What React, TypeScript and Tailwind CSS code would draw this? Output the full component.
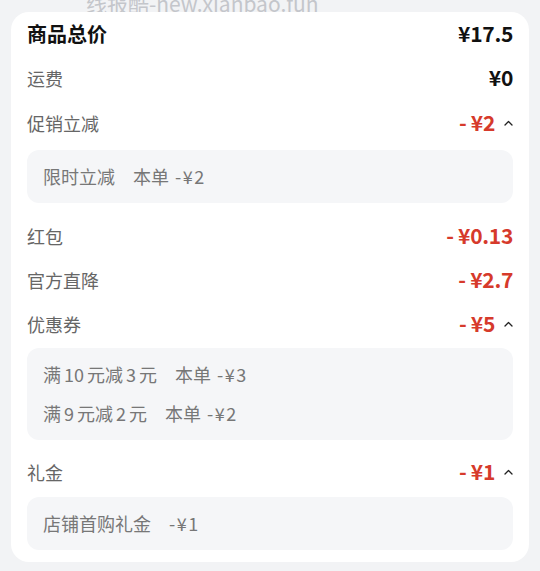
const font = { fontFamily: '"Noto Sans CJK SC", "Noto Sans", sans-serif' };

function Chevron() {
  return (
    <svg width="9" height="6" viewBox="0 0 9 6" className="ml-[9px]" fill="none">
      <path d="M1 5L4.5 1.5L8 5" stroke="#222" strokeWidth="1.3" strokeLinecap="round" strokeLinejoin="round" />
    </svg>
  );
}

function Row({ label, amount, red, toggle }: { label: string; amount: string; red?: boolean; toggle?: boolean }) {
  return (
    <div className="flex h-[44px] items-center justify-between">
      <span className="text-[18px] text-[#666]">{label}</span>
      <div className="flex items-center">
        <span className={`text-[21px] font-bold tracking-[-0.3px] ${red ? 'text-[#d63a2b]' : 'text-[#111]'}`}>{amount}</span>
        {toggle && <Chevron />}
      </div>
    </div>
  );
}

// digits in the detail lines sit a little apart from the CJK around them
function Spaced({ text }: { text: string }) {
  return (
    <>
      {text.split(/(\d+)/).map((p, i) =>
        /^\d+$/.test(p) ? <span key={i} className="mx-[3px]">{p}</span> : <span key={i}>{p}</span>
      )}
    </>
  );
}

function Detail({ lines }: { lines: [string, string, string][] }) {
  return (
    <div className="rounded-[12px] bg-[#f5f6f8] px-4 py-[7px]">
      {lines.map(([a, b, c], i) => (
        <div key={i} className="flex h-[39px] items-center text-[18px] text-[#777]">
          <Spaced text={a} />
          {b && <span className="ml-[18px]">{b}</span>}
          <span className={`tracking-[1.5px] ${b ? 'ml-[6px]' : 'ml-[18px]'}`}>{c}</span>
        </div>
      ))}
    </div>
  );
}

export default function App() {
  return (
    <div className="relative min-h-[571px] overflow-hidden bg-[#f2f3f5]" style={font}>
      <div className="absolute left-[86px] top-[-12px] text-[21px] text-[#c4c6cb]">线报酷-new.xianbao.fun</div>
      <div className="relative z-10 mx-[11px] mt-[12px] rounded-[18px] bg-white px-4 pb-[12px]">
        <div className="flex h-[44px] items-center justify-between">
          <span className="text-[20px] font-bold text-[#111]">商品总价</span>
          <span className="text-[21px] font-bold tracking-[-0.3px] text-[#111]">¥17.5</span>
        </div>
        <Row label="运费" amount="¥0" />
        <div className="pt-[1px]">
          <Row label="促销立减" amount="- ¥2" red toggle />
        </div>
        <div className="mb-[11px] mt-[5px]">
          <Detail lines={[['限时立减', '本单', '-¥2']]} />
        </div>
        <Row label="红包" amount="- ¥0.13" red />
        <Row label="官方直降" amount="- ¥2.7" red />
        <Row label="优惠券" amount="- ¥5" red toggle />
        <div className="mb-[10px] mt-[2px]">
          <Detail lines={[['满10元减3元', '本单', '-¥3'], ['满9元减2元', '本单', '-¥2']]} />
        </div>
        <Row label="礼金" amount="- ¥1" red toggle />
        <div className="mt-[3px]">
          <Detail lines={[['店铺首购礼金', '', '-¥1']]} />
        </div>
      </div>
    </div>
  );
}
